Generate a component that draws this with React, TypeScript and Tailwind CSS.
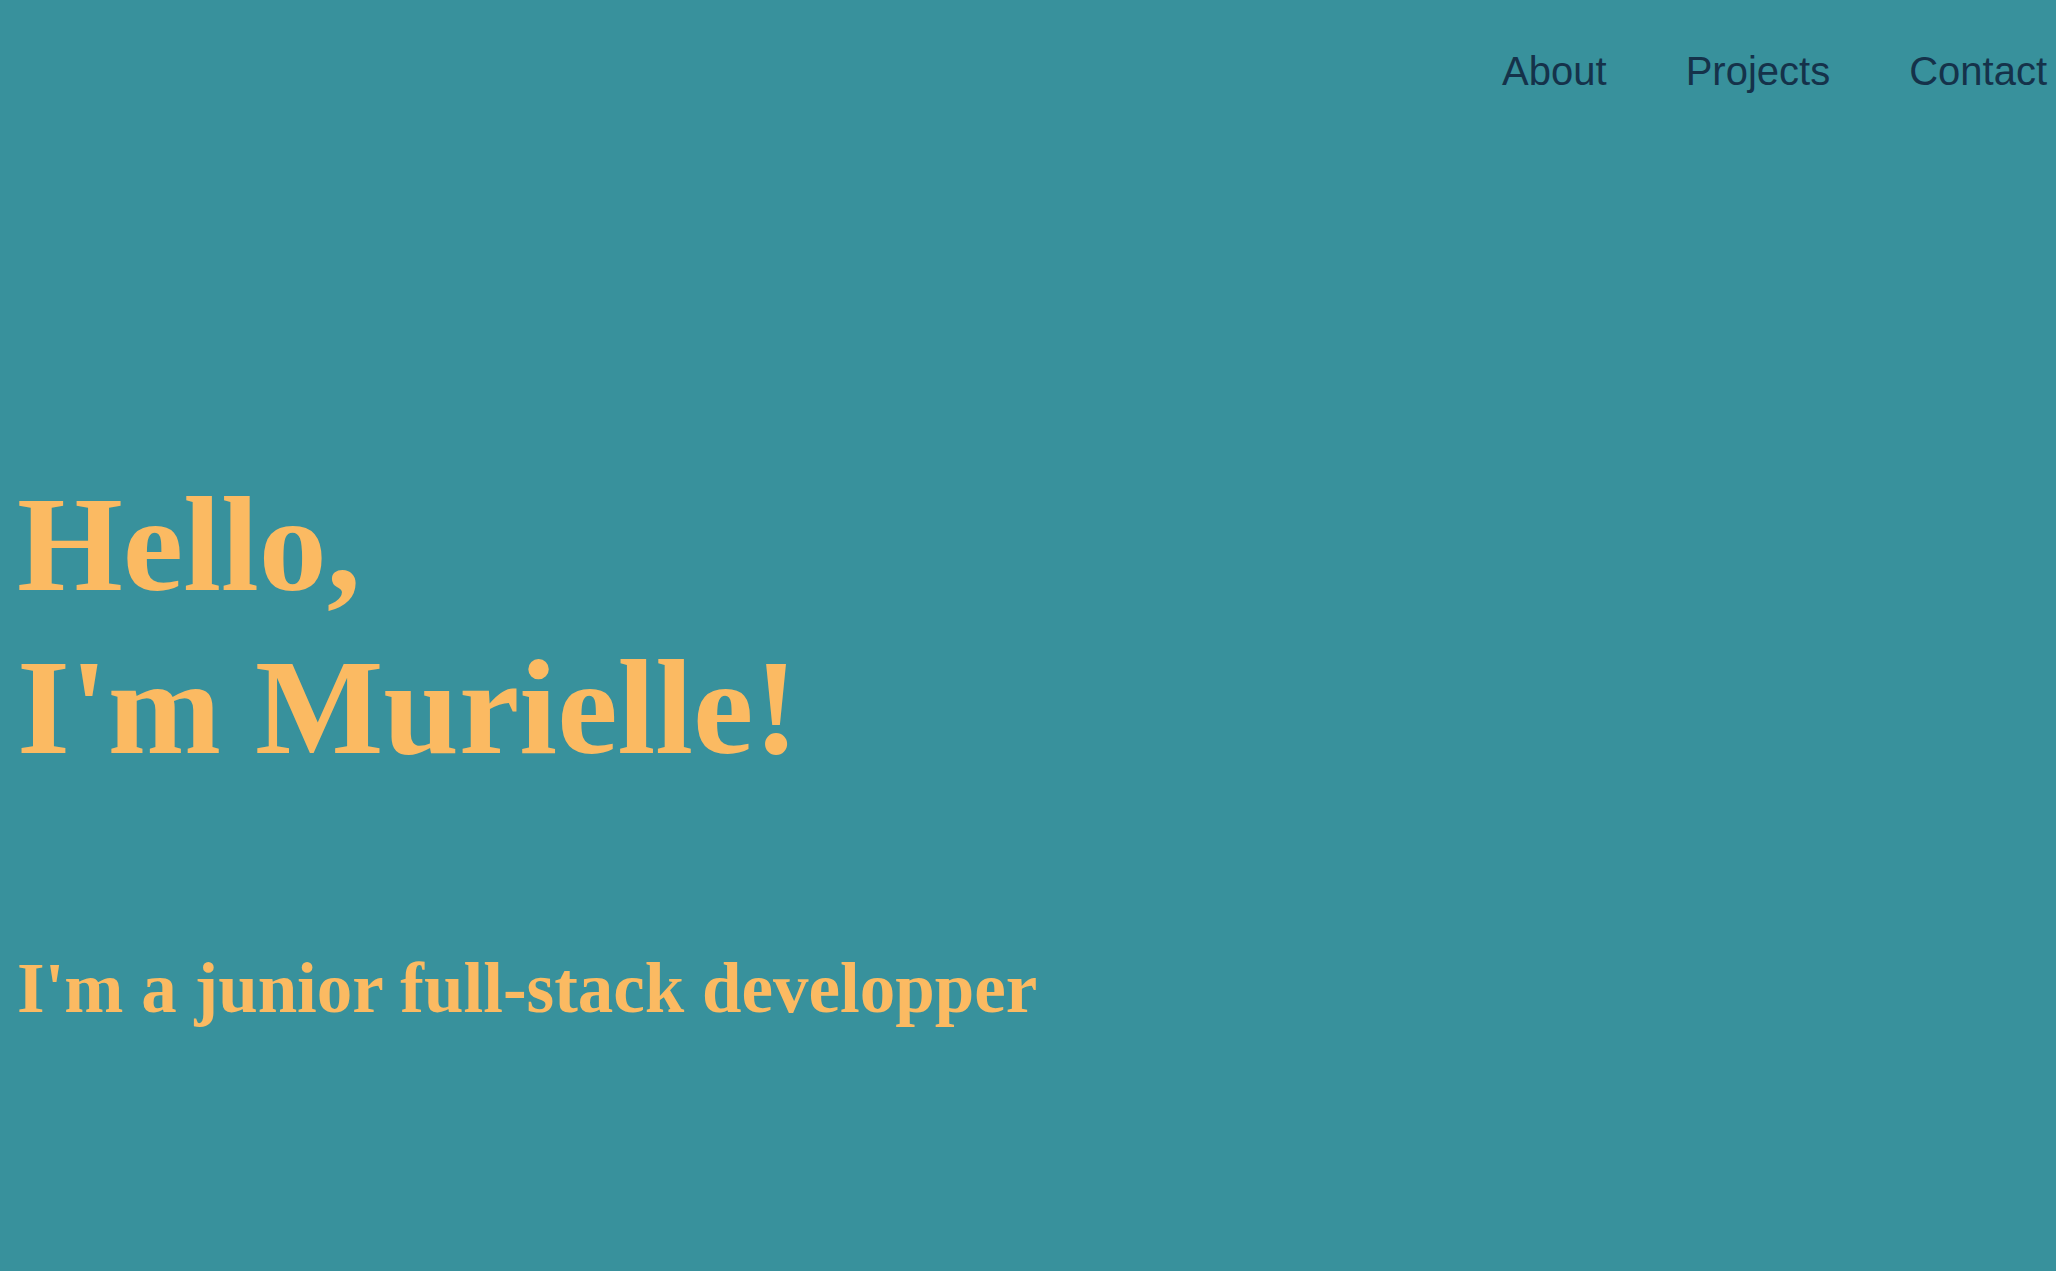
// App.tsx
export default function App() {
  const links = ['About', 'Projects', 'Contact']

  return (
    <div className="min-h-screen w-full bg-[#38919c] overflow-hidden">
      {/* Top nav */}
      <header className="flex justify-end pt-[51px] pr-[9px]">
        <nav>
          <ul className="flex gap-[79px] font-['Liberation_Sans',Arial,sans-serif] text-[40px] leading-[40px] text-[#15324a]">
            {links.map((l) => (
              <li key={l}>
                <a href={`#${l.toLowerCase()}`}>{l}</a>
              </li>
            ))}
          </ul>
        </nav>
      </header>

      {/* Hero */}
      <main className="pl-[17px] font-['Liberation_Serif','Times_New_Roman',serif] font-bold text-[#fbba62]">
        <h1 className="mt-[372px] text-[136px] leading-[163px]">
          Hello,
          <br />
          I'm Murielle!
        </h1>
        <h2 className="mt-[164px] text-[71px] leading-[71px]">I'm a junior full-stack developper</h2>
      </main>
    </div>
  )
}
